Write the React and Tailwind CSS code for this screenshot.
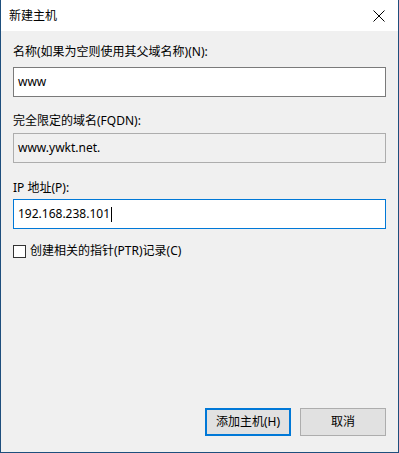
import React from "react";

export default function App() {
  const font = { fontFamily: '"Noto Sans", "Noto Sans CJK SC", sans-serif' };
  return (
    <div
      className="w-[399px] h-[453px] flex flex-col bg-[#f0f0f0] border-x border-b border-[#1e4f7d] text-[12px] text-black overflow-hidden"
      style={font}
    >
      <div className="h-[31px] bg-white flex items-center justify-between pl-[8px] pr-[13px] shrink-0">
        <span className="leading-[16px]">新建主机</span>
        <svg width="12" height="12" viewBox="0 0 12 12" className="mt-[1px]">
          <path d="M0.5 0.5 L11.5 11.5 M11.5 0.5 L0.5 11.5" stroke="#000" strokeWidth="1" fill="none" />
        </svg>
      </div>
      <div className="flex flex-col flex-1 px-[12px]">
        <div className="mt-[13px] leading-[16px]">名称(如果为空则使用其父域名称)(N):</div>
        <div className="mt-[7px] h-[30px] bg-white border border-[#7a7a7a] flex items-center pl-[4px] leading-[16px]">
          www
        </div>
        <div className="mt-[16px] leading-[16px]">完全限定的域名(FQDN):</div>
        <div className="mt-[4px] h-[30px] bg-[#f0f0f0] border border-[#adadad] flex items-center pl-[4px] leading-[16px]">
          www.ywkt.net.
        </div>
        <div className="mt-[17px] leading-[16px]">IP 地址(P):</div>
        <div className="mt-[3px] h-[30px] bg-white border border-[#0078d7] flex items-center pl-[4px] leading-[16px]">
          <span>192.168.238.101</span>
          <span className="w-px h-[15px] bg-black ml-[1px]" />
        </div>
        <div className="mt-[14px] flex items-center gap-[4px]">
          <span className="w-[13px] h-[13px] bg-white border border-[#333333] shrink-0" />
          <span className="leading-[16px]">创建相关的指针(PTR)记录(C)</span>
        </div>
        <div className="flex-1" />
        <div className="flex justify-end gap-[9px] pb-[16px]">
          <button className="w-[86px] h-[28px] bg-[#e1e1e1] border-2 border-[#0078d7] flex items-center justify-center leading-[16px]">
            添加主机(H)
          </button>
          <button className="w-[86px] h-[28px] bg-[#e1e1e1] border border-[#adadad] flex items-center justify-center leading-[16px]">
            取消
          </button>
        </div>
      </div>
    </div>
  );
}
